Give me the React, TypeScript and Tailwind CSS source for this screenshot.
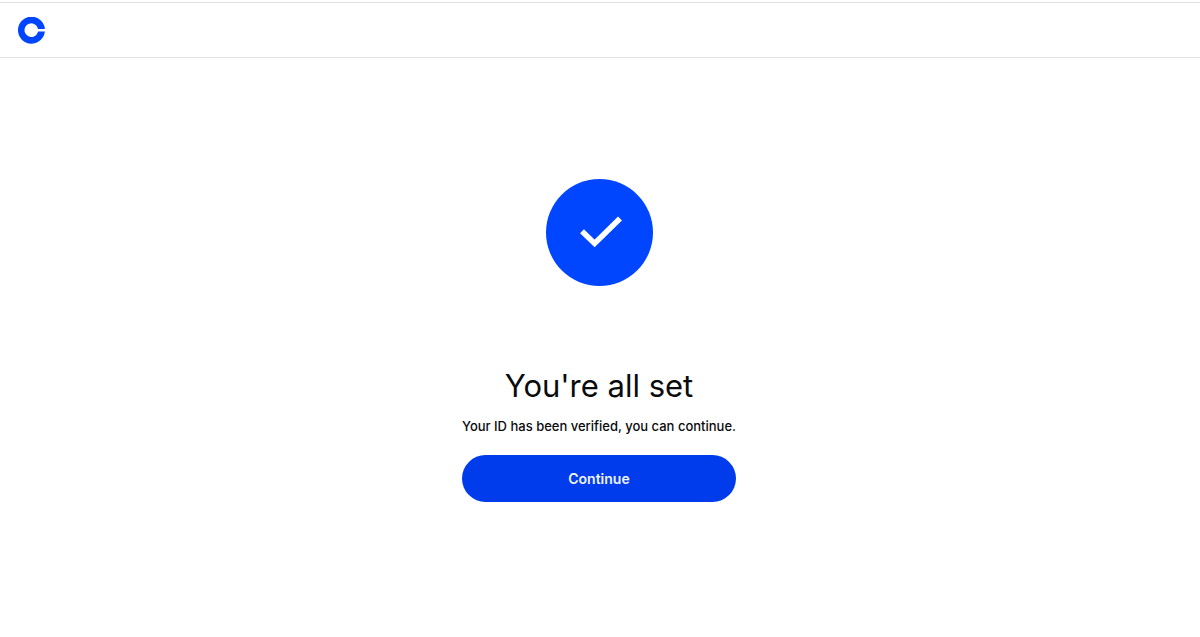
function Logo() {
  return (
    <svg viewBox="0 0 27 27" className="size-[27px]" aria-hidden="true">
      <path
        fill="#0045ff"
        d="M26.9 11.9H20A6.8 6.8 0 1 0 20 14.4H26.9A13.5 13.5 0 1 1 26.9 11.9Z"
      />
    </svg>
  );
}

function SuccessMark() {
  return (
    <svg viewBox="0 0 107 107" className="size-[107px]" aria-hidden="true">
      <circle cx="53.5" cy="53.5" r="53.5" fill="#0045ff" />
      <path d="M36 52.2L48.6 64.4L74 39.4" fill="none" stroke="#fff" strokeWidth="5.6" />
    </svg>
  );
}

export default function App() {
  return (
    <div className="flex min-h-screen flex-col bg-white pt-[2px] font-['Inter',sans-serif] text-[#0a0b0d]">
      <header className="flex h-14 items-center border-y border-[#dfe1e5] px-[18px]">
        <a href="#" aria-label="Home">
          <Logo />
        </a>
      </header>
      <main className="flex flex-col items-center pt-[121px] pr-[2px]">
        <SuccessMark />
        <h1 className="mt-20 text-[31px] leading-10">You&apos;re all set</h1>
        <div className="mt-2 flex flex-col items-stretch">
          <p className="text-center text-[13px] leading-6 font-medium">
            Your ID has been verified, you can continue.
          </p>
          <button
            type="button"
            className="mt-[17px] h-[47px] min-w-[274px] rounded-full bg-[#003ceb] text-sm font-semibold text-[#eef3ff]"
          >
            Continue
          </button>
        </div>
      </main>
    </div>
  );
}
